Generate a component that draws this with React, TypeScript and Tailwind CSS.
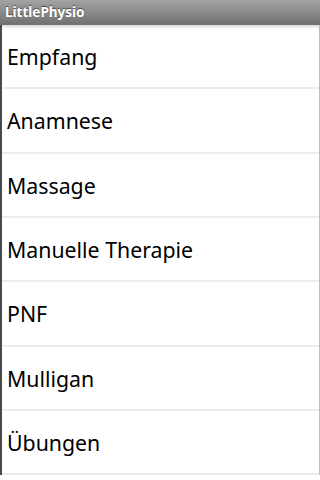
const items = ['Empfang', 'Anamnese', 'Massage', 'Manuelle Therapie', 'PNF', 'Mulligan', 'Übungen'];

export default function App() {
  return (
    <div className="h-[480px] w-[320px] overflow-hidden bg-white font-['Noto_Sans',sans-serif]">
      <div className="flex h-[25px] items-center bg-gradient-to-b from-[#a3a3a3] to-[#707070] px-[5px]">
        <span className="text-[13.5px] font-bold text-white [text-shadow:0_-1px_1px_rgba(0,0,0,0.5)]">LittlePhysio</span>
      </div>
      <div className="relative border-l-2 border-r border-l-[#4a4a4a] border-r-[#bdbdbd]">
        <div className="pointer-events-none absolute left-0 right-0 top-0 h-[4px] bg-gradient-to-b from-[rgba(0,0,0,0.15)] to-transparent" />
        <ul>
          {items.map((item) => (
            <li
              key={item}
              className="flex h-[64.33px] items-center border-b-2 border-[#ececec] pl-[5px] pt-[1px] text-[21.3px] leading-none text-black"
            >
              {item}
            </li>
          ))}
        </ul>
      </div>
    </div>
  );
}
